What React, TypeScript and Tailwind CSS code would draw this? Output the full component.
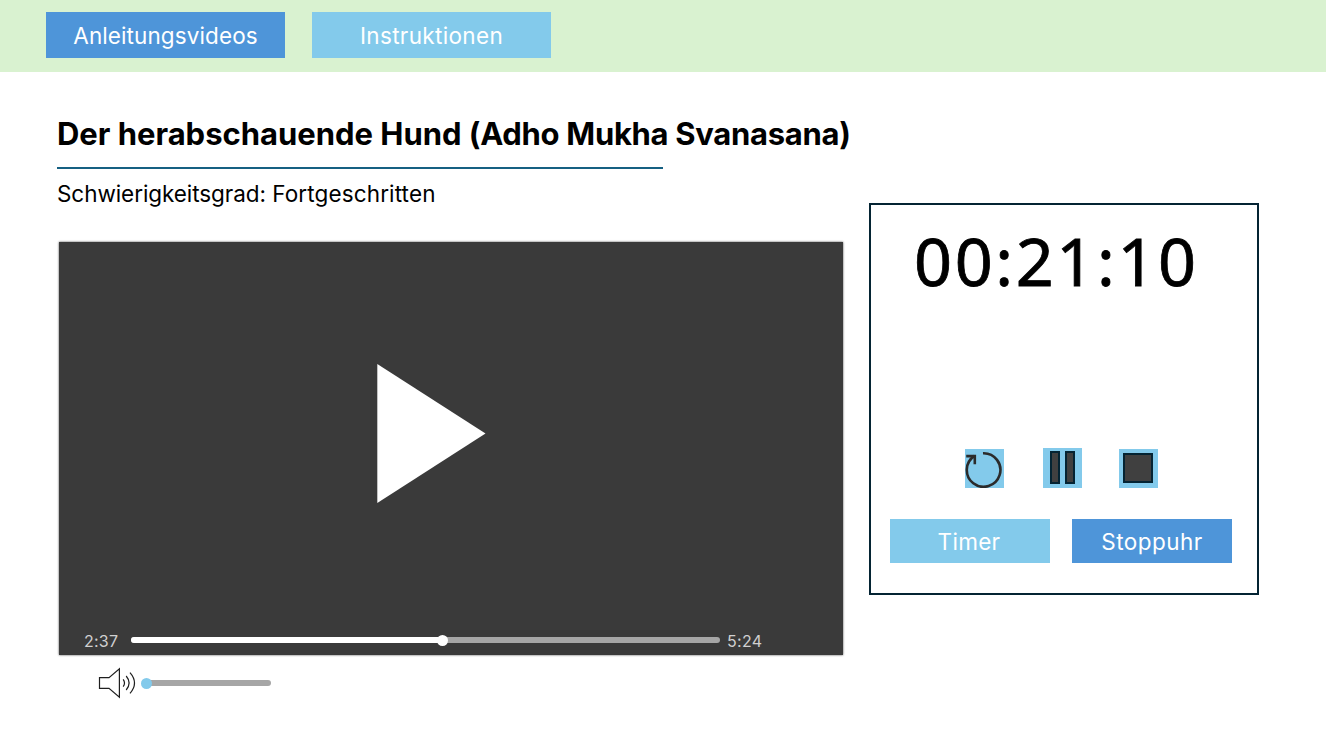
import type { ReactNode } from 'react';

function Tab({ active, className, children }: { active?: boolean; className: string; children: ReactNode }) {
  return (
    <button
      className={`flex items-center justify-center pt-[2px] text-[22.5px] leading-none text-white ${active ? 'bg-[#4e95d9]' : 'bg-[#83caeb]'} ${className}`}
    >
      {children}
    </button>
  );
}

function RestartIcon() {
  return (
    <svg width="39" height="39" viewBox="0 0 39 39" fill="none" stroke="#2b2b2b" strokeWidth="2.6">
      <path d="M18 4.2A16.8 16.8 0 1 1 9.6 6.8" />
      <path d="M1.2 7.1H9.8V15.2" />
    </svg>
  );
}

function PauseIcon() {
  return (
    <svg width="39" height="40" viewBox="0 0 39 40" fill="#404040" stroke="#042433" strokeWidth="2">
      <rect x="8" y="4" width="8" height="31" />
      <rect x="23" y="4" width="8" height="31" />
    </svg>
  );
}

function StopIcon() {
  return (
    <svg width="39" height="39" viewBox="0 0 39 39" fill="#404040" stroke="#042433" strokeWidth="2">
      <rect x="5" y="5" width="28" height="28" />
    </svg>
  );
}

function SpeakerIcon() {
  return (
    <svg width="38" height="32" viewBox="0 0 38 32" fill="none" stroke="#1f1f1f" strokeWidth="1.2">
      <path d="M1.5 10.6H11L21.4 1.8V30.2L11 21.3H1.5Z" />
      <path d="M25.2 12.3Q27.8 16 25.2 19.7" />
      <path d="M28.2 9Q34 16 28.2 23" />
      <path d="M32 5.6Q41 16 32 26.4" />
    </svg>
  );
}

function Video() {
  return (
    <div className="ml-[2px] flex h-[413px] w-[784px] flex-col bg-[#3a3a3a] shadow-[0_0_2px_rgba(58,58,58,0.9)]">
      <svg className="mt-[122px] ml-[318px] shrink-0" width="109" height="140" viewBox="0 0 109 140">
        <path d="M0.3 0V139L108.5 69.5Z" fill="#fff" />
      </svg>
      <div className="mt-[124px] flex h-6 items-center pl-[25px] text-base leading-none text-[#d0d0d0]">
        <span className="w-[47px] pt-[2px] tracking-[0.25px]">2:37</span>
        <div className="flex h-[6px] w-[589px] items-center rounded-full bg-[#a6a6a6]">
          <div className="h-[6px] w-[307px] rounded-l-full bg-white" />
          <div className="-ml-px size-[11px] shrink-0 rounded-full bg-white" />
        </div>
        <span className="ml-[7px] pt-[2px] tracking-[0.3px]">5:24</span>
      </div>
    </div>
  );
}

function Stopwatch() {
  return (
    <aside className="mt-[131px] h-[392px] w-[390px] shrink-0 border-2 border-[#042433] bg-white">
      <div className="mt-[9px] pl-[43px] font-['Noto_Sans',sans-serif] text-[66.5px] leading-[92px] tracking-[2.6px] [-webkit-text-stroke:0.8px_black]">
        00:21:10
      </div>
      <div className="mt-[142px] flex h-10 items-end pl-[94px]">
        <button className="size-[39px] bg-[#83caeb]"><RestartIcon /></button>
        <button className="ml-[39px] h-10 w-[39px] bg-[#83caeb]"><PauseIcon /></button>
        <button className="ml-[37px] size-[39px] bg-[#83caeb]"><StopIcon /></button>
      </div>
      <div className="mt-[31px] flex gap-[22px] pl-[19px]">
        <Tab className="h-11 w-40 pr-[2px] tracking-[0.3px]">Timer</Tab>
        <Tab active className="h-11 w-40 tracking-[0.47px]">Stoppuhr</Tab>
      </div>
    </aside>
  );
}

export default function App() {
  return (
    <div className="min-h-[750px] w-[1326px] bg-white font-['Inter',sans-serif] text-black">
      <header className="flex h-[72px] gap-[27px] bg-[#d9f2d0] pt-3 pl-[46px]">
        <Tab active className="h-[46px] w-[239px] tracking-[0.1px]">Anleitungsvideos</Tab>
        <Tab className="h-[46px] w-[239px] tracking-[0.34px]">Instruktionen</Tab>
      </header>
      <main className="flex pl-[57px]">
        <section className="w-[812px] shrink-0">
          <h1 className="pt-[42px] pb-px text-[31px] leading-[40px] font-bold whitespace-nowrap">
            <span className="tracking-[-0.02px]">Der herabschauende Hund </span>
            <span className="tracking-[-0.3px]">(Adho Mukha Svanasana)</span>
          </h1>
          <div className="mt-3 h-[2px] w-[606px] bg-[#156082]" />
          <p className="mt-[10px] mb-[33px] text-[22.5px] leading-[30px]">
            <span className="tracking-[-0.07px]">Schwierigkeitsgrad: </span>
            <span className="tracking-[0.13px]">Fortgeschritten</span>
          </p>
          <Video />
          <div className="mt-3 flex h-8 items-center pl-[41px]">
            <SpeakerIcon />
            <div className="z-10 ml-[5px] size-[11px] rounded-full bg-[#83caeb]" />
            <div className="-ml-[5px] h-[6px] w-[124px] rounded-full bg-[#a6a6a6]" />
          </div>
        </section>
        <Stopwatch />
      </main>
    </div>
  );
}
